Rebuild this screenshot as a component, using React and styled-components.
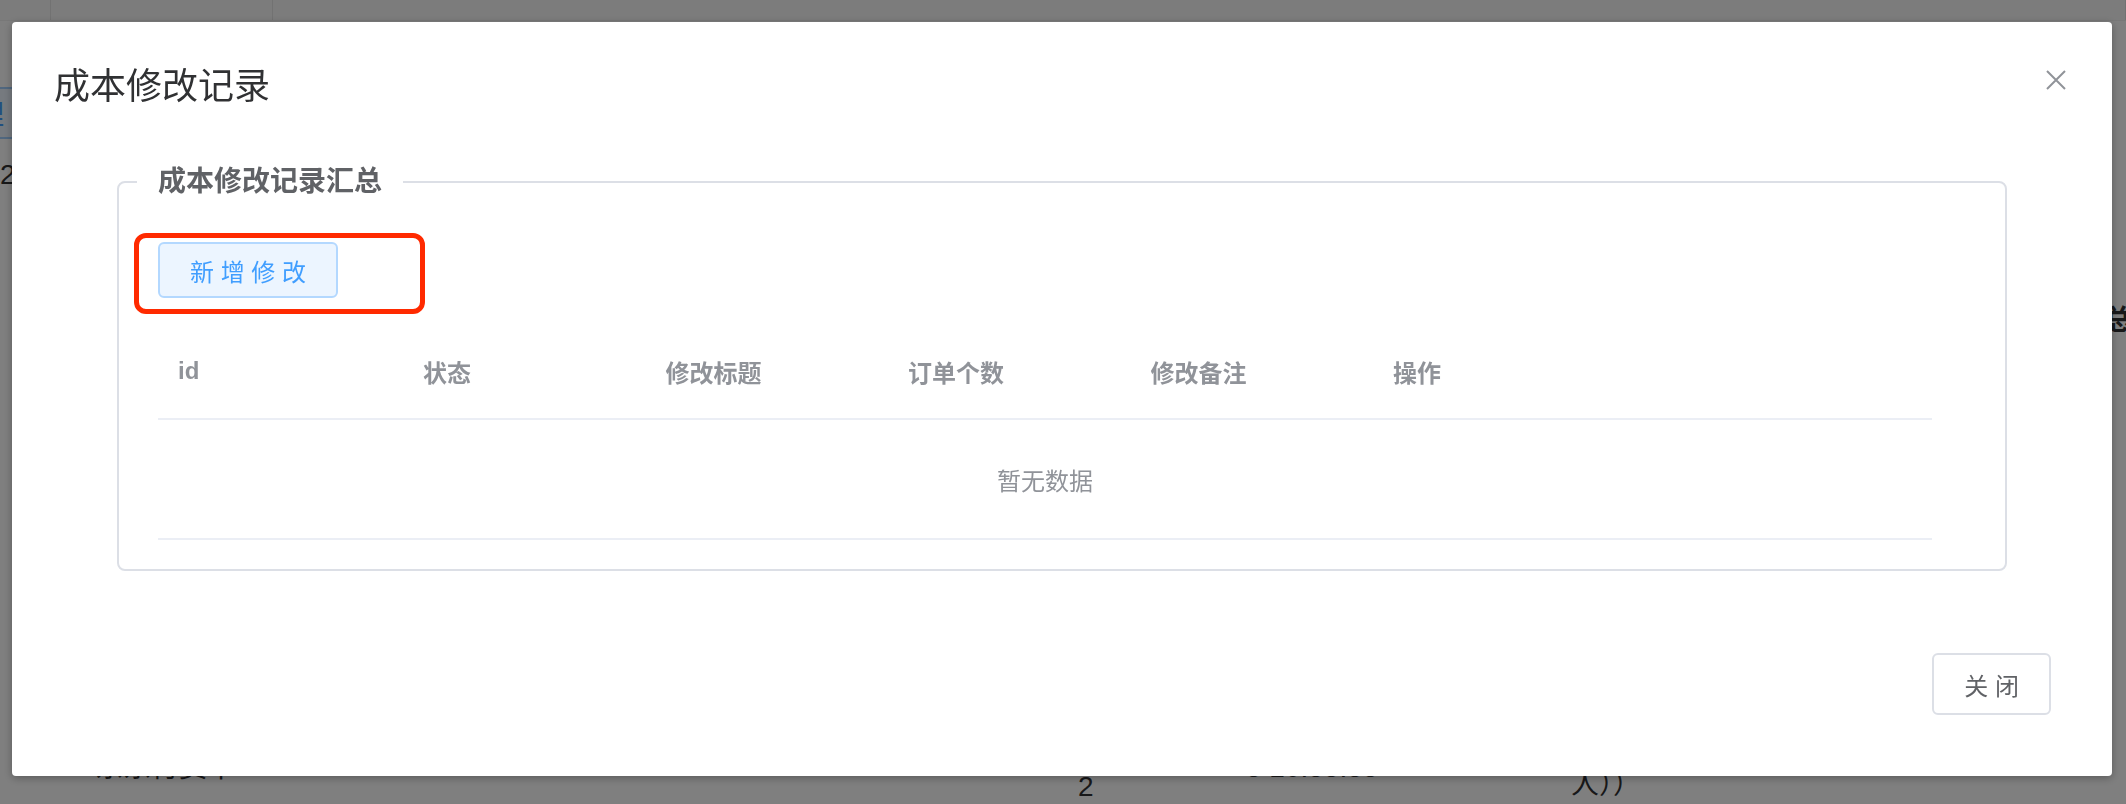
import styled, { createGlobalStyle } from 'styled-components';

const GlobalStyle = createGlobalStyle`
  html, body {
    margin: 0;
    padding: 0;
    background: #fff;
  }
  body {
    font-family: "Liberation Sans", "Noto Sans CJK SC", sans-serif;
  }
  * {
    box-sizing: border-box;
  }
`

const Root = styled.div`
  position: relative;
  width: 2126px;
  height: 804px;
  overflow: hidden;
  background: #fff;
  display: flex;
  flex-direction: column;
`

const BgTabs = styled.div`
  display: grid;
  grid-template-columns: 51px 222px 1fr;
  height: 21px;
  border-bottom: 1px solid #f0f0f0;
`
const BgTab = styled.div`
  border-right: 1px solid #e4e4e4;
  background: #f8f8f8;
`
const BgSide = styled.div`
  flex: 1;
  display: flex;
  justify-content: space-between;
  padding-top: 66px;
  font-size: 28px;
  color: #303133;
`
const BgLeft = styled.div`
  display: flex;
  flex-direction: column;
  gap: 20px;
  width: 40px;
`
const BgBlue = styled.div`
  color: #409eff;
  margin-left: -24px;
  padding: 4px 0;
  border-top: 2px solid #a0cfff;
  border-bottom: 2px solid #a0cfff;
  background: #ecf5ff;
`
const BgRight = styled.div`
  width: 22px;
  padding-top: 211px;
  font-weight: bold;
`
const BgBottom = styled.div`
  display: grid;
  grid-template-columns: 1078px 168px 325px 1fr;
  align-items: start;
  height: 56px;
  font-size: 28px;
  color: #303133;
  line-height: 30px;
`
const BgText = styled.span`
  margin-top: ${(p) => p.$top}px;
  padding-left: ${(p) => p.$left || 0}px;
`

const Backdrop = styled.div`
  position: fixed;
  inset: 0;
  background: rgba(0, 0, 0, 0.5);
  display: flex;
  justify-content: center;
  align-items: flex-start;
  padding-top: 22px;
  padding-right: 2px;
`

const Dialog = styled.div`
  width: 2100px;
  background: #fff;
  border-radius: 4px;
  box-shadow: 0 2px 8px rgba(0, 0, 0, 0.3);
  display: flex;
  flex-direction: column;
`

const Header = styled.div`
  display: flex;
  justify-content: space-between;
  align-items: flex-start;
  padding: 41px 46px 17px 42px;
`
const Title = styled.span`
  font-size: 36px;
  line-height: 48px;
  color: #303133;
`
const CloseIcon = styled.button`
  width: 20px;
  height: 20px;
  margin-top: 7px;
  padding: 0;
  border: none;
  background: transparent;
  display: flex;
  cursor: pointer;
`

const Body = styled.div`
  padding: 34px 105px 0;
`

const Fieldset = styled.fieldset`
  margin: 0;
  border: 2px solid #dcdfe6;
  border-radius: 8px;
  padding: 0 0 29px 18px;
  min-width: 0;
`
const Legend = styled.legend`
  padding: 0 21px;
  font-size: 28px;
  line-height: 40px;
  font-weight: 600;
  color: #606266;
`
const Content = styled.div`
  padding: 0 73px 0 21px;
`

const ActionBar = styled.div`
  position: relative;
  display: flex;
  margin-top: 40px;
`
const Highlight = styled.div`
  position: absolute;
  left: -24px;
  top: -9px;
  width: 291px;
  height: 81px;
  border: 5px solid #ff2a00;
  border-radius: 12px;
  pointer-events: none;
`
const Button = styled.button`
  height: ${(p) => p.$h}px;
  padding: 0 30px;
  font-family: inherit;
  font-size: 24px;
  border-radius: 6px;
  border: 2px solid ${(p) => (p.$primary ? '#b3d8ff' : '#dcdfe6')};
  background: ${(p) => (p.$primary ? '#ecf5ff' : '#fff')};
  color: ${(p) => (p.$primary ? '#409eff' : '#606266')};
  white-space: pre;
  cursor: pointer;
`

const Table = styled.div`
  margin-top: 26px;
`
const HeadRow = styled.div`
  display: grid;
  grid-template-columns: 245px repeat(4, 242.5px) 1fr;
  height: 96px;
  border-bottom: 2px solid #ebeef5;
`
const HeadCell = styled.div`
  display: flex;
  align-items: center;
  padding-left: 20px;
  font-size: 24px;
  font-weight: bold;
  color: #909399;
`
const Empty = styled.div`
  height: 120px;
  border-bottom: 2px solid #ebeef5;
  display: flex;
  align-items: center;
  justify-content: center;
  font-size: 24px;
  color: #909399;
`

const Footer = styled.div`
  display: flex;
  justify-content: flex-end;
  padding: 82px 61px 61px;
`

const columns = ['id', '状态', '修改标题', '订单个数', '修改备注', '操作']

export default function App() {
  return (
    <Root>
      <GlobalStyle />
      <BgTabs>
        <BgTab />
        <BgTab />
        <BgTab />
      </BgTabs>
      <BgSide>
        <BgLeft>
          <BgBlue>理</BgBlue>
          <div>2</div>
        </BgLeft>
        <BgRight>总</BgRight>
      </BgSide>
      <BgBottom>
        <BgText $top={5} $left={95}>东东符费十</BgText>
        <BgText $top={24}>2</BgText>
        <BgText $top={5}>5 10:55:55</BgText>
        <BgText $top={22}>人））</BgText>
      </BgBottom>

      <Backdrop>
        <Dialog>
          <Header>
            <Title>成本修改记录</Title>
            <CloseIcon aria-label="close">
              <svg width="20" height="20" viewBox="0 0 20 20">
                <path d="M1 1 L19 19 M19 1 L1 19" stroke="#909399" strokeWidth="2" fill="none" />
              </svg>
            </CloseIcon>
          </Header>
          <Body>
            <Fieldset>
              <Legend>成本修改记录汇总</Legend>
              <Content>
                <ActionBar>
                  <Button $primary $h={56}>新 增 修 改</Button>
                  <Highlight />
                </ActionBar>
                <Table>
                  <HeadRow>
                    {columns.map((c) => (
                      <HeadCell key={c}>{c}</HeadCell>
                    ))}
                  </HeadRow>
                  <Empty>暂无数据</Empty>
                </Table>
              </Content>
            </Fieldset>
          </Body>
          <Footer>
            <Button $h={62}>关 闭</Button>
          </Footer>
        </Dialog>
      </Backdrop>
    </Root>
  );
}
